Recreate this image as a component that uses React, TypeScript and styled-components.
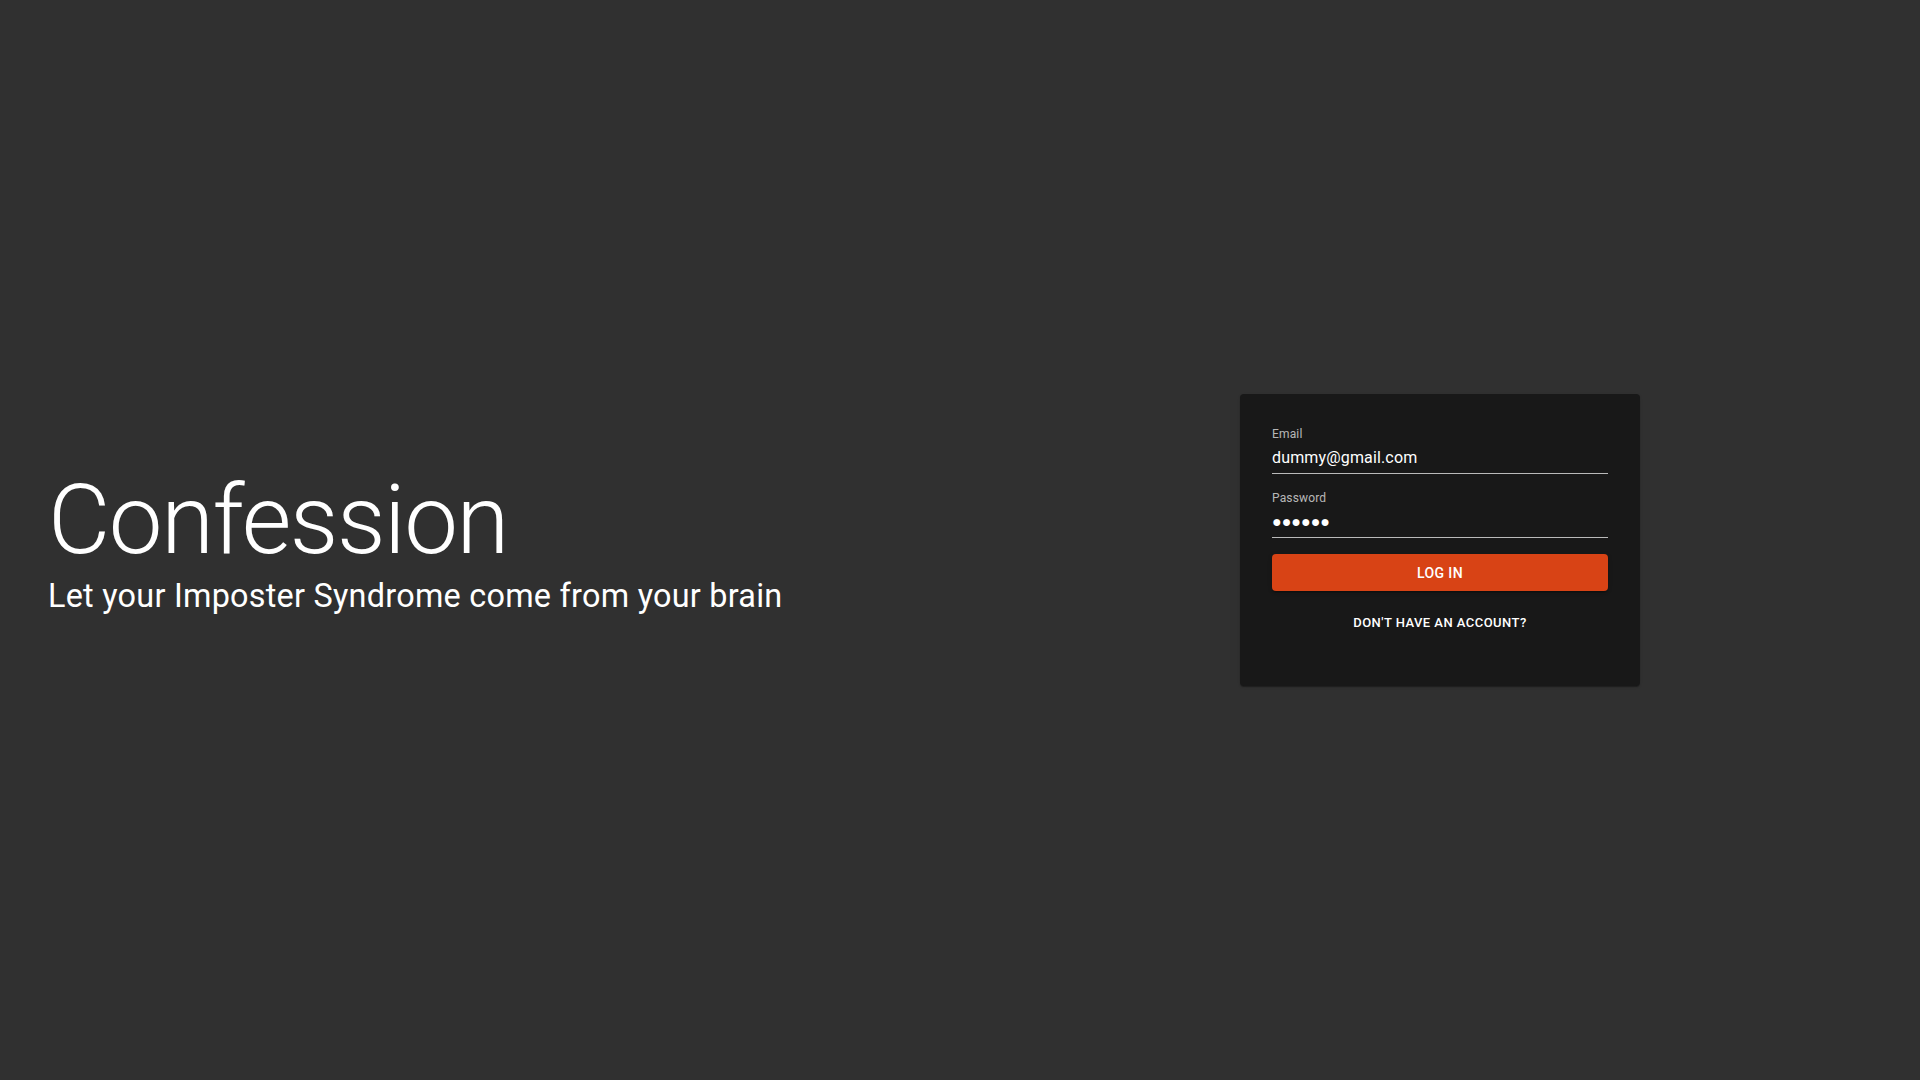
import React from "react";
import styled, { createGlobalStyle } from "styled-components";

const Global = createGlobalStyle`
  * { box-sizing: border-box; }
  html, body { margin: 0; padding: 0; background: #303030; }
  body { font-family: Roboto, "Helvetica", Arial, sans-serif; color: #fff; }
`;

const Page = styled.main`
  display: grid;
  grid-template-columns: 1fr 1fr;
  align-items: center;
  height: 100vh;
  width: 100vw;
  background: #303030;
`;

const Hero = styled.section`
  padding-left: 48px;
  display: flex;
  flex-direction: column;
`;

const Title = styled.h1`
  margin: 0;
  font-family: Roboto, sans-serif;
  font-weight: 300;
  font-size: 96px;
  line-height: 1.167;
  letter-spacing: -1.5px;
  color: #fff;
`;

const Subtitle = styled.h4`
  margin: 0;
  font-family: Roboto, sans-serif;
  font-weight: 400;
  font-size: 32.4px;
  line-height: 1.235;
  letter-spacing: 0.25px;
  color: #fff;
`;

const Side = styled.section`
  display: flex;
  justify-content: center;
  align-items: center;
`;

const Card = styled.form`
  width: 400px;
  height: 292px;
  background: #181818;
  border-radius: 4px;
  padding: 16px 32px;
  display: flex;
  flex-direction: column;
  box-shadow: 0px 2px 1px -1px rgba(0, 0, 0, 0.2), 0px 1px 1px 0px rgba(0, 0, 0, 0.14),
    0px 1px 3px 0px rgba(0, 0, 0, 0.12);
`;

const Field = styled.label`
  display: flex;
  flex-direction: column;
  margin: 16px 0 0;
  position: relative;
`;

const Label = styled.span`
  font-family: Roboto, sans-serif;
  font-size: 12px;
  line-height: 16px;
  letter-spacing: 0.15px;
  color: rgba(255, 255, 255, 0.7);
`;

const Input = styled.input<{ $dots?: boolean }>`
  font-family: ${(p) => (p.$dots ? '"Liberation Sans", Arial, sans-serif' : "Roboto, sans-serif")};
  font-size: 16px;
  letter-spacing: ${(p) => (p.$dots ? "0" : "0.15px")};
  color: #fff;
  background: transparent;
  border: none;
  border-bottom: 1px solid rgba(255, 255, 255, 0.7);
  outline: none;
  padding: 4px 0 4px;
  height: 32px;
  line-height: 23px;
  width: 100%;
`;

const Primary = styled.button`
  margin-top: 16px;
  height: 37px;
  width: 100%;
  border: none;
  border-radius: 4px;
  background: #d84315;
  color: #fff;
  font-family: Roboto, sans-serif;
  font-weight: 500;
  font-size: 14px;
  letter-spacing: 0.4px;
  text-transform: uppercase;
  box-shadow: 0px 3px 1px -2px rgba(0, 0, 0, 0.2), 0px 2px 2px 0px rgba(0, 0, 0, 0.14),
    0px 1px 5px 0px rgba(0, 0, 0, 0.12);
  cursor: pointer;
`;

const TextButton = styled.button`
  margin-top: 16px;
  height: 31px;
  align-self: center;
  border: none;
  background: transparent;
  color: #fff;
  font-family: Roboto, sans-serif;
  font-weight: 500;
  font-size: 13px;
  letter-spacing: 0.46px;
  text-transform: uppercase;
  padding: 4px 5px;
  cursor: pointer;
`;

export default function App() {
  return (
    <>
      <Global />
      <Page>
        <Hero>
          <Title>Confession</Title>
          <Subtitle>Let your Imposter Syndrome come from your brain</Subtitle>
        </Hero>
        <Side>
          <Card onSubmit={(e) => e.preventDefault()}>
            <Field>
              <Label>Email</Label>
              <Input type="email" defaultValue="dummy@gmail.com" />
            </Field>
            <Field>
              <Label>Password</Label>
              <Input $dots type="text" readOnly defaultValue="●●●●●●" aria-label="Password (hidden)" />
            </Field>
            <Primary type="submit">Log in</Primary>
            <TextButton type="button">Don't have an account?</TextButton>
          </Card>
        </Side>
      </Page>
    </>
  );
}
